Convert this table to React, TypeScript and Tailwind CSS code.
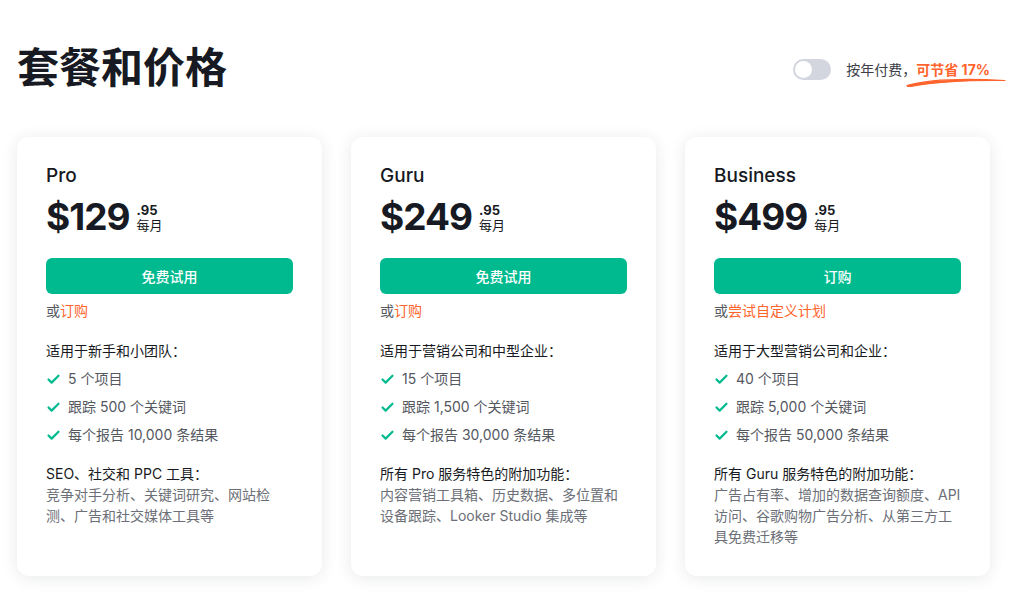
import { Check } from "lucide-react";

type Plan = {
  name: string;
  price: string;
  cta: string;
  altLink: string;
  audience: string;
  items: string[];
  extraTitle: string;
  extraText: string;
};

const plans: Plan[] = [
  {
    name: "Pro",
    price: "$129",
    cta: "免费试用",
    altLink: "订购",
    audience: "适用于新手和小团队：",
    items: ["5 个项目", "跟踪 500 个关键词", "每个报告 10,000 条结果"],
    extraTitle: "SEO、社交和 PPC 工具：",
    extraText: "竞争对手分析、关键词研究、网站检测、广告和社交媒体工具等",
  },
  {
    name: "Guru",
    price: "$249",
    cta: "免费试用",
    altLink: "订购",
    audience: "适用于营销公司和中型企业：",
    items: ["15 个项目", "跟踪 1,500 个关键词", "每个报告 30,000 条结果"],
    extraTitle: "所有 Pro 服务特色的附加功能：",
    extraText: "内容营销工具箱、历史数据、多位置和设备跟踪、Looker Studio 集成等",
  },
  {
    name: "Business",
    price: "$499",
    cta: "订购",
    altLink: "尝试自定义计划",
    audience: "适用于大型营销公司和企业：",
    items: ["40 个项目", "跟踪 5,000 个关键词", "每个报告 50,000 条结果"],
    extraTitle: "所有 Guru 服务特色的附加功能：",
    extraText: "广告占有率、增加的数据查询额度、API 访问、谷歌购物广告分析、从第三方工具免费迁移等",
  },
];

const PlanCard = ({ plan }: { plan: Plan }) => {
  return (
    <div className="bg-white rounded-xl shadow-[0_2px_16px_rgba(30,40,60,0.10)] px-[29px] pt-[26px] pb-[29px]">
      <div className="text-[19px] leading-[26px] font-medium text-[#171a22]">{plan.name}</div>
      <div className="flex items-center mt-[4px] h-[48px]">
        <span className="text-[37px] leading-[48px] font-bold text-[#171a22] tracking-[-1px]">
          {plan.price}
        </span>
        <div className="flex flex-col ml-[7px] mt-[2px] text-[#171a22]">
          <span className="text-[13px] leading-[14px] font-bold">.95</span>
          <span className="text-[13px] leading-[16px]">每月</span>
        </div>
      </div>
      <button className="mt-[17px] w-full h-[36px] rounded-md bg-[#00ba8f] text-white text-[14px] font-medium">
        {plan.cta}
      </button>
      <div className="mt-[7px] text-[14px] leading-[20px] text-[#55585f]">
        或<span className="text-[#ff642d]">{plan.altLink}</span>
      </div>
      <div className="mt-[20px] text-[14px] leading-[20px] text-[#171a22]">{plan.audience}</div>
      <ul className="flex flex-col gap-[8px] mt-[8px]">
        {plan.items.map((item) => (
          <li key={item} className="flex items-center gap-[7px] text-[14px] leading-[20px] text-[#55585f]">
            <Check className="w-[15px] h-[15px] text-[#00ba8f]" strokeWidth={3.5} />
            {item}
          </li>
        ))}
      </ul>
      <div className="mt-[18px] text-[14px] leading-[21px]">
        <div className="text-[#171a22]">{plan.extraTitle}</div>
        <div className="text-[#6c6f77]">{plan.extraText}</div>
      </div>
    </div>
  );
};

const App = () => {
  return (
    <div
      className="min-h-[599px] bg-white pl-[17px] pr-[34px] pt-[41px]"
      style={{ fontFamily: "Inter, 'Noto Sans CJK SC', sans-serif" }}
    >
      <div className="flex items-center justify-between">
        <h1 className="text-[42px] leading-[53px] font-bold text-[#171a22]">套餐和价格</h1>
        <div className="flex items-center mt-[4px]">
          <div className="w-[38px] h-[21px] rounded-full bg-[#d3d6de] p-[2px] flex items-center">
            <div className="w-[17px] h-[17px] rounded-full bg-white" />
          </div>
          <span className="ml-[15px] text-[14px] text-[#3d4048]">按年付费，</span>
          <span className="relative text-[14px] font-bold text-[#ff642d]">
            可节省 17%
            <svg
              className="absolute left-[-10px] top-[16px]"
              width="100"
              height="12"
              viewBox="0 0 100 12"
            >
              <path
                d="M1 10.5 C 20 5, 55 3, 99 5.5 C 60 5, 25 7.5, 2 12 Z"
                fill="#ff642d"
                stroke="#ff642d"
                strokeWidth="1.2"
                strokeLinejoin="round"
              />
            </svg>
          </span>
        </div>
      </div>
      <div className="grid grid-cols-3 gap-[29px] mt-[43px]">
        {plans.map((p) => (
          <PlanCard key={p.name} plan={p} />
        ))}
      </div>
    </div>
  );
};

export default App;
